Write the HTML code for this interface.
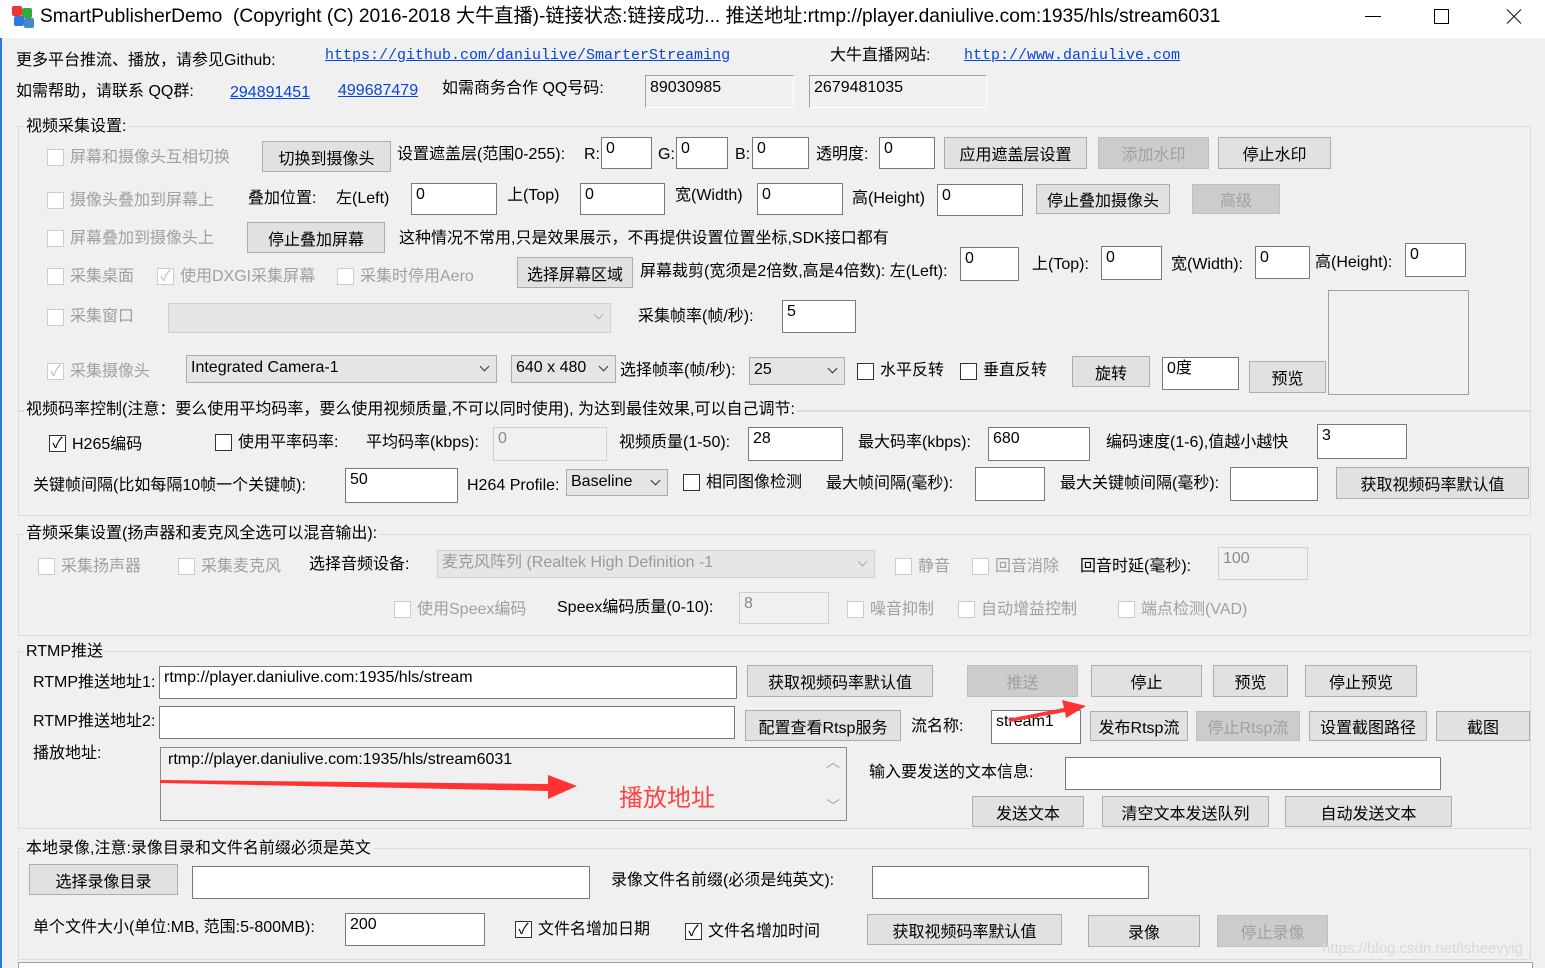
<!DOCTYPE html>
<html><head><meta charset="utf-8"><style>
*{box-sizing:border-box;margin:0;padding:0}
body{width:1545px;height:968px;background:#f0f0f0;position:relative;overflow:hidden;font-family:"Liberation Sans","Noto Sans CJK SC",sans-serif;font-size:16px;color:#000}
div,span{position:absolute;white-space:nowrap}
.t{line-height:20px}
.d{color:#a0a0a0}
.in{background:#fff;border:1px solid #7a7a7a;padding:1px 4px;line-height:20px}
.ind{background:#f0f0f0;border:1px solid #cfcfcf;color:#8a8a8a;padding:1px 4px;line-height:20px}
.b{background:#e1e1e1;border:1px solid #adadad;text-align:center;display:flex;align-items:center;justify-content:center}
.bd{background:#cccccc;border:1px solid #bfbfbf;color:#a0a0a0;text-align:center;display:flex;align-items:center;justify-content:center}
.cb{width:17px;height:17px;background:#fff;border:1px solid #333;font-size:15px;line-height:15px;text-align:center}
.cbd{width:17px;height:17px;background:#fff;border:1px solid #cccccc;color:#bbb;font-size:15px;line-height:15px;text-align:center}
.cmb{background:#e5e5e5;border:1px solid #acacac;padding:0 4px;line-height:24px}
.cmb:after{content:"";position:absolute;right:8px;top:7px;width:6px;height:6px;border-right:1.3px solid #333;border-bottom:1.3px solid #333;transform:rotate(45deg)}
.cmbd{background:#e6e6e6;border:1px solid #d0d0d0;color:#9a9a9a;padding:0 4px;line-height:24px}
.cmbd:after{content:"";position:absolute;right:8px;top:7px;width:6px;height:6px;border-right:1.3px solid #aaa;border-bottom:1.3px solid #aaa;transform:rotate(45deg)}
.g{border:1px solid #dcdcdc}
.lg{background:#f0f0f0;padding:0 2px}
.lk{font-family:"Liberation Mono",monospace;font-size:15px;color:#0645d8;text-decoration:underline}
.lk2{color:#0645d8;text-decoration:underline}
</style></head><body>
<div style="left:0;top:0;width:1545px;height:38px;background:#fff"></div>
<div style="left:0;top:38px;width:2px;height:930px;background:#2b7bd6"></div>
<div style="left:12px;top:6px;width:10px;height:10px;background:#e33;border-radius:2px"></div>
<div style="left:22px;top:8px;width:10px;height:10px;background:#3a3;border-radius:2px"></div>
<div style="left:14px;top:16px;width:10px;height:10px;background:#2a7be0;border-radius:2px"></div>
<div style="left:24px;top:18px;width:10px;height:10px;background:#48c;border-radius:2px"></div>
<div class="t" style="left:40px;top:5px;font-size:19.2px;line-height:24px">SmartPublisherDemo&nbsp; (Copyright (C) 2016-2018 大牛直播)-链接状态:链接成功... 推送地址:rtmp://player.daniulive.com:1935/hls/stream6031</div>
<div style="left:1365px;top:16px;width:16px;height:1px;background:#000"></div>
<div style="left:1434px;top:9px;width:15px;height:15px;border:1px solid #000"></div>
<div style="left:1504px;top:16px;width:20px;height:1px;background:#000;transform:rotate(45deg)"></div>
<div style="left:1504px;top:16px;width:20px;height:1px;background:#000;transform:rotate(-45deg)"></div>

<div class="t" style="left:16px;top:51px">更多平台推流、播放，请参见Github:</div>
<div class="t lk" style="left:325px;top:46px">https://github.com/daniulive/SmarterStreaming</div>
<div class="t" style="left:830px;top:46px">大牛直播网站:</div>
<div class="t lk" style="left:964px;top:46px">http://www.daniulive.com</div>
<div class="t" style="left:16px;top:82px">如需帮助，请联系 QQ群:</div>
<div class="t lk2" style="left:230px;top:83px">294891451</div>
<div class="t lk2" style="left:338px;top:81px">499687479</div>
<div class="t" style="left:442px;top:79px">如需商务合作 QQ号码:</div>
<div style="left:645px;top:75px;width:149px;height:33px;border-top:1px solid #a0a0a0;border-left:1px solid #a0a0a0;border-bottom:1px solid #fff;border-right:1px solid #fff;padding:2px 4px;line-height:20px">89030985</div>
<div style="left:809px;top:75px;width:178px;height:33px;border-top:1px solid #a0a0a0;border-left:1px solid #a0a0a0;border-bottom:1px solid #fff;border-right:1px solid #fff;padding:2px 4px;line-height:20px">2679481035</div>

<div class="g" style="left:18px;top:126px;width:1513px;height:390px"></div>
<div class="g" style="left:18px;top:410px;width:1513px;height:0"></div>
<div class="t lg" style="left:24px;top:117px">视频采集设置:</div>
<div class="cbd" style="left:47px;top:149px"></div><div class="t d" style="left:70px;top:148px">屏幕和摄像头互相切换</div>
<div class="b" style="left:262px;top:141px;width:129px;height:31px">切换到摄像头</div>
<div class="t" style="left:397px;top:145px">设置遮盖层(范围0-255):</div>
<div class="t" style="left:584px;top:145px">R:</div><div class="in" style="left:601px;top:137px;width:51px;height:32px">0</div>
<div class="t" style="left:658px;top:145px">G:</div><div class="in" style="left:676px;top:137px;width:52px;height:32px">0</div>
<div class="t" style="left:735px;top:145px">B:</div><div class="in" style="left:752px;top:137px;width:57px;height:32px">0</div>
<div class="t" style="left:816px;top:145px">透明度:</div><div class="in" style="left:879px;top:137px;width:56px;height:32px">0</div>
<div class="b" style="left:944px;top:137px;width:143px;height:32px">应用遮盖层设置</div>
<div class="bd" style="left:1098px;top:137px;width:111px;height:32px">添加水印</div>
<div class="b" style="left:1218px;top:137px;width:113px;height:32px">停止水印</div>

<div class="cbd" style="left:47px;top:192px"></div><div class="t d" style="left:70px;top:191px">摄像头叠加到屏幕上</div>
<div class="t" style="left:248px;top:189px">叠加位置:</div>
<div class="t" style="left:336px;top:189px">左(Left)</div><div class="in" style="left:411px;top:183px;width:86px;height:32px">0</div>
<div class="t" style="left:507px;top:186px">上(Top)</div><div class="in" style="left:580px;top:183px;width:85px;height:32px">0</div>
<div class="t" style="left:675px;top:186px">宽(Width)</div><div class="in" style="left:757px;top:183px;width:86px;height:32px">0</div>
<div class="t" style="left:852px;top:189px">高(Height)</div><div class="in" style="left:937px;top:184px;width:86px;height:32px">0</div>
<div class="b" style="left:1036px;top:184px;width:134px;height:30px">停止叠加摄像头</div>
<div class="bd" style="left:1192px;top:184px;width:88px;height:30px">高级</div>

<div class="cbd" style="left:47px;top:230px"></div><div class="t d" style="left:70px;top:229px">屏幕叠加到摄像头上</div>
<div class="b" style="left:247px;top:222px;width:138px;height:31px">停止叠加屏幕</div>
<div class="t" style="left:399px;top:229px">这种情况不常用,只是效果展示，不再提供设置位置坐标,SDK接口都有</div>

<div class="cbd" style="left:47px;top:268px"></div><div class="t d" style="left:70px;top:267px">采集桌面</div>
<div class="cbd" style="left:157px;top:268px">✓</div><div class="t d" style="left:180px;top:267px">使用DXGI采集屏幕</div>
<div class="cbd" style="left:337px;top:268px"></div><div class="t d" style="left:360px;top:267px">采集时停用Aero</div>
<div class="b" style="left:517px;top:257px;width:116px;height:31px">选择屏幕区域</div>
<div class="t" style="left:640px;top:262px">屏幕裁剪(宽须是2倍数,高是4倍数): 左(Left):</div>
<div class="in" style="left:960px;top:247px;width:59px;height:34px">0</div>
<div class="t" style="left:1032px;top:255px">上(Top):</div><div class="in" style="left:1101px;top:246px;width:61px;height:34px">0</div>
<div class="t" style="left:1171px;top:255px">宽(Width):</div><div class="in" style="left:1255px;top:246px;width:55px;height:33px">0</div>
<div class="t" style="left:1315px;top:253px">高(Height):</div><div class="in" style="left:1405px;top:243px;width:61px;height:34px">0</div>
<div style="left:1328px;top:290px;width:141px;height:105px;border:1px solid #a0a0a0"></div>

<div class="cbd" style="left:47px;top:309px"></div><div class="t d" style="left:70px;top:307px">采集窗口</div>
<div class="cmbd" style="left:168px;top:303px;width:443px;height:30px"></div>
<div class="t" style="left:638px;top:307px">采集帧率(帧/秒):</div>
<div class="in" style="left:782px;top:300px;width:74px;height:33px">5</div>

<div class="cbd" style="left:47px;top:363px">✓</div><div class="t d" style="left:70px;top:362px">采集摄像头</div>
<div class="cmb" style="left:186px;top:355px;width:311px;height:28px">Integrated Camera-1</div>
<div class="cmb" style="left:511px;top:355px;width:105px;height:28px">640 x 480</div>
<div class="t" style="left:620px;top:361px">选择帧率(帧/秒):</div>
<div class="cmb" style="left:749px;top:357px;width:96px;height:28px">25</div>
<div class="cb" style="left:857px;top:363px"></div><div class="t" style="left:880px;top:361px">水平反转</div>
<div class="cb" style="left:960px;top:363px"></div><div class="t" style="left:983px;top:361px">垂直反转</div>
<div class="b" style="left:1072px;top:356px;width:78px;height:31px">旋转</div>
<div class="in" style="left:1162px;top:357px;width:77px;height:33px">0度</div>
<div class="b" style="left:1249px;top:361px;width:77px;height:32px">预览</div>

<div class="t lg" style="left:24px;top:400px">视频码率控制(注意：要么使用平均码率，要么使用视频质量,不可以同时使用), 为达到最佳效果,可以自己调节:</div>
<div class="cb" style="left:49px;top:435px">✓</div><div class="t" style="left:72px;top:435px">H265编码</div>
<div class="cb" style="left:215px;top:434px"></div><div class="t" style="left:238px;top:433px">使用平率码率:</div>
<div class="t" style="left:366px;top:433px">平均码率(kbps):</div><div class="ind" style="left:493px;top:427px;width:114px;height:34px">0</div>
<div class="t" style="left:619px;top:433px">视频质量(1-50):</div><div class="in" style="left:748px;top:427px;width:95px;height:34px">28</div>
<div class="t" style="left:858px;top:433px">最大码率(kbps):</div><div class="in" style="left:988px;top:427px;width:102px;height:34px">680</div>
<div class="t" style="left:1106px;top:433px">编码速度(1-6),值越小越快</div><div class="in" style="left:1317px;top:424px;width:90px;height:35px">3</div>

<div class="t" style="left:33px;top:476px">关键帧间隔(比如每隔10帧一个关键帧):</div>
<div class="in" style="left:345px;top:468px;width:113px;height:35px">50</div>
<div class="t" style="left:467px;top:476px">H264 Profile:</div>
<div class="cmb" style="left:566px;top:469px;width:102px;height:27px">Baseline</div>
<div class="cb" style="left:683px;top:474px"></div><div class="t" style="left:706px;top:473px">相同图像检测</div>
<div class="t" style="left:826px;top:474px">最大帧间隔(毫秒):</div><div class="in" style="left:975px;top:467px;width:70px;height:34px"></div>
<div class="t" style="left:1060px;top:474px">最大关键帧间隔(毫秒):</div><div class="in" style="left:1230px;top:467px;width:88px;height:34px"></div>
<div class="b" style="left:1336px;top:467px;width:193px;height:32px">获取视频码率默认值</div>

<div class="g" style="left:18px;top:534px;width:1513px;height:102px"></div>
<div class="t lg" style="left:24px;top:524px">音频采集设置(扬声器和麦克风全选可以混音输出):</div>
<div class="cbd" style="left:38px;top:558px"></div><div class="t d" style="left:61px;top:557px">采集扬声器</div>
<div class="cbd" style="left:178px;top:558px"></div><div class="t d" style="left:201px;top:557px">采集麦克风</div>
<div class="t" style="left:309px;top:555px">选择音频设备:</div>
<div class="cmbd" style="left:437px;top:550px;width:438px;height:28px">麦克风阵列 (Realtek High Definition -1</div>
<div class="cbd" style="left:895px;top:558px"></div><div class="t d" style="left:918px;top:557px">静音</div>
<div class="cbd" style="left:972px;top:558px"></div><div class="t d" style="left:995px;top:557px">回音消除</div>
<div class="t" style="left:1080px;top:557px">回音时延(毫秒):</div>
<div class="ind" style="left:1218px;top:547px;width:90px;height:33px">100</div>
<div class="cbd" style="left:394px;top:601px"></div><div class="t d" style="left:417px;top:600px">使用Speex编码</div>
<div class="t" style="left:557px;top:598px">Speex编码质量(0-10):</div>
<div class="ind" style="left:739px;top:592px;width:90px;height:32px">8</div>
<div class="cbd" style="left:847px;top:601px"></div><div class="t d" style="left:870px;top:600px">噪音抑制</div>
<div class="cbd" style="left:958px;top:601px"></div><div class="t d" style="left:981px;top:600px">自动增益控制</div>
<div class="cbd" style="left:1118px;top:601px"></div><div class="t d" style="left:1141px;top:600px">端点检测(VAD)</div>

<div class="g" style="left:18px;top:651px;width:1513px;height:178px"></div>
<div class="t lg" style="left:24px;top:642px">RTMP推送</div>
<div class="t" style="left:33px;top:673px">RTMP推送地址1:</div>
<div class="in" style="left:159px;top:666px;width:578px;height:33px">rtmp://player.daniulive.com:1935/hls/stream</div>
<div class="b" style="left:747px;top:665px;width:186px;height:32px">获取视频码率默认值</div>
<div class="bd" style="left:967px;top:665px;width:111px;height:32px">推送</div>
<div class="b" style="left:1091px;top:665px;width:111px;height:32px">停止</div>
<div class="b" style="left:1213px;top:665px;width:75px;height:32px">预览</div>
<div class="b" style="left:1305px;top:665px;width:112px;height:32px">停止预览</div>
<div class="t" style="left:33px;top:712px">RTMP推送地址2:</div>
<div class="in" style="left:159px;top:706px;width:576px;height:33px"></div>
<div class="b" style="left:745px;top:710px;width:156px;height:31px">配置查看Rtsp服务</div>
<div class="t" style="left:911px;top:717px">流名称:</div>
<div class="in" style="left:991px;top:710px;width:90px;height:34px">stream1</div>
<div class="b" style="left:1090px;top:711px;width:98px;height:30px">发布Rtsp流</div>
<div class="bd" style="left:1196px;top:711px;width:104px;height:30px">停止Rtsp流</div>
<div class="b" style="left:1309px;top:711px;width:118px;height:30px">设置截图路径</div>
<div class="b" style="left:1436px;top:711px;width:94px;height:30px">截图</div>
<div class="t" style="left:33px;top:744px">播放地址:</div>
<div style="left:160px;top:747px;width:687px;height:74px;border:1px solid #8a8a8a;background:#f0f0f0"></div>
<div class="t" style="left:168px;top:750px">rtmp://player.daniulive.com:1935/hls/stream6031</div>
<div class="t d" style="left:826px;top:752px;font-size:14px">︿</div>
<div class="t d" style="left:826px;top:796px;font-size:14px">﹀</div>
<div class="t" style="left:619px;top:785px;font-size:24px;line-height:28px;color:#f44">播放地址</div>
<div class="t" style="left:869px;top:763px">输入要发送的文本信息:</div>
<div class="in" style="left:1065px;top:757px;width:376px;height:33px"></div>
<div class="b" style="left:972px;top:796px;width:112px;height:31px">发送文本</div>
<div class="b" style="left:1102px;top:796px;width:167px;height:31px">清空文本发送队列</div>
<div class="b" style="left:1285px;top:796px;width:167px;height:31px">自动发送文本</div>

<div class="g" style="left:18px;top:848px;width:1513px;height:112px"></div>
<div class="t lg" style="left:24px;top:839px">本地录像,注意:录像目录和文件名前缀必须是英文</div>
<div class="b" style="left:29px;top:864px;width:149px;height:31px">选择录像目录</div>
<div class="in" style="left:192px;top:866px;width:398px;height:33px"></div>
<div class="t" style="left:611px;top:871px">录像文件名前缀(必须是纯英文):</div>
<div class="in" style="left:872px;top:866px;width:277px;height:33px"></div>
<div class="t" style="left:33px;top:918px">单个文件大小(单位:MB, 范围:5-800MB):</div>
<div class="in" style="left:345px;top:913px;width:140px;height:33px">200</div>
<div class="cb" style="left:515px;top:921px">✓</div><div class="t" style="left:538px;top:920px">文件名增加日期</div>
<div class="cb" style="left:685px;top:923px">✓</div><div class="t" style="left:708px;top:922px">文件名增加时间</div>
<div class="b" style="left:867px;top:914px;width:195px;height:31px">获取视频码率默认值</div>
<div class="b" style="left:1088px;top:915px;width:112px;height:32px">录像</div>
<div class="bd" style="left:1217px;top:915px;width:111px;height:32px">停止录像</div>
<div class="t" style="left:1322px;top:939px;color:#d8d8d8;font-size:15px">https://blog.csdn.net/lsheevyig</div>
<div style="left:18px;top:962px;width:1515px;height:6px;border:1px solid #a0a0a0;border-bottom:none;background:#fff"></div>
<svg style="position:absolute;left:0;top:0" width="1545" height="968">
<polygon points="1008,719 1064,708 1062,700 1086,706 1066,718 1065,712 1010,722" fill="#f33"/>
<polygon points="160,780 548,784 548,775 577,786 548,799 548,791 160,783" fill="#f33"/>
</svg>
</body></html>
